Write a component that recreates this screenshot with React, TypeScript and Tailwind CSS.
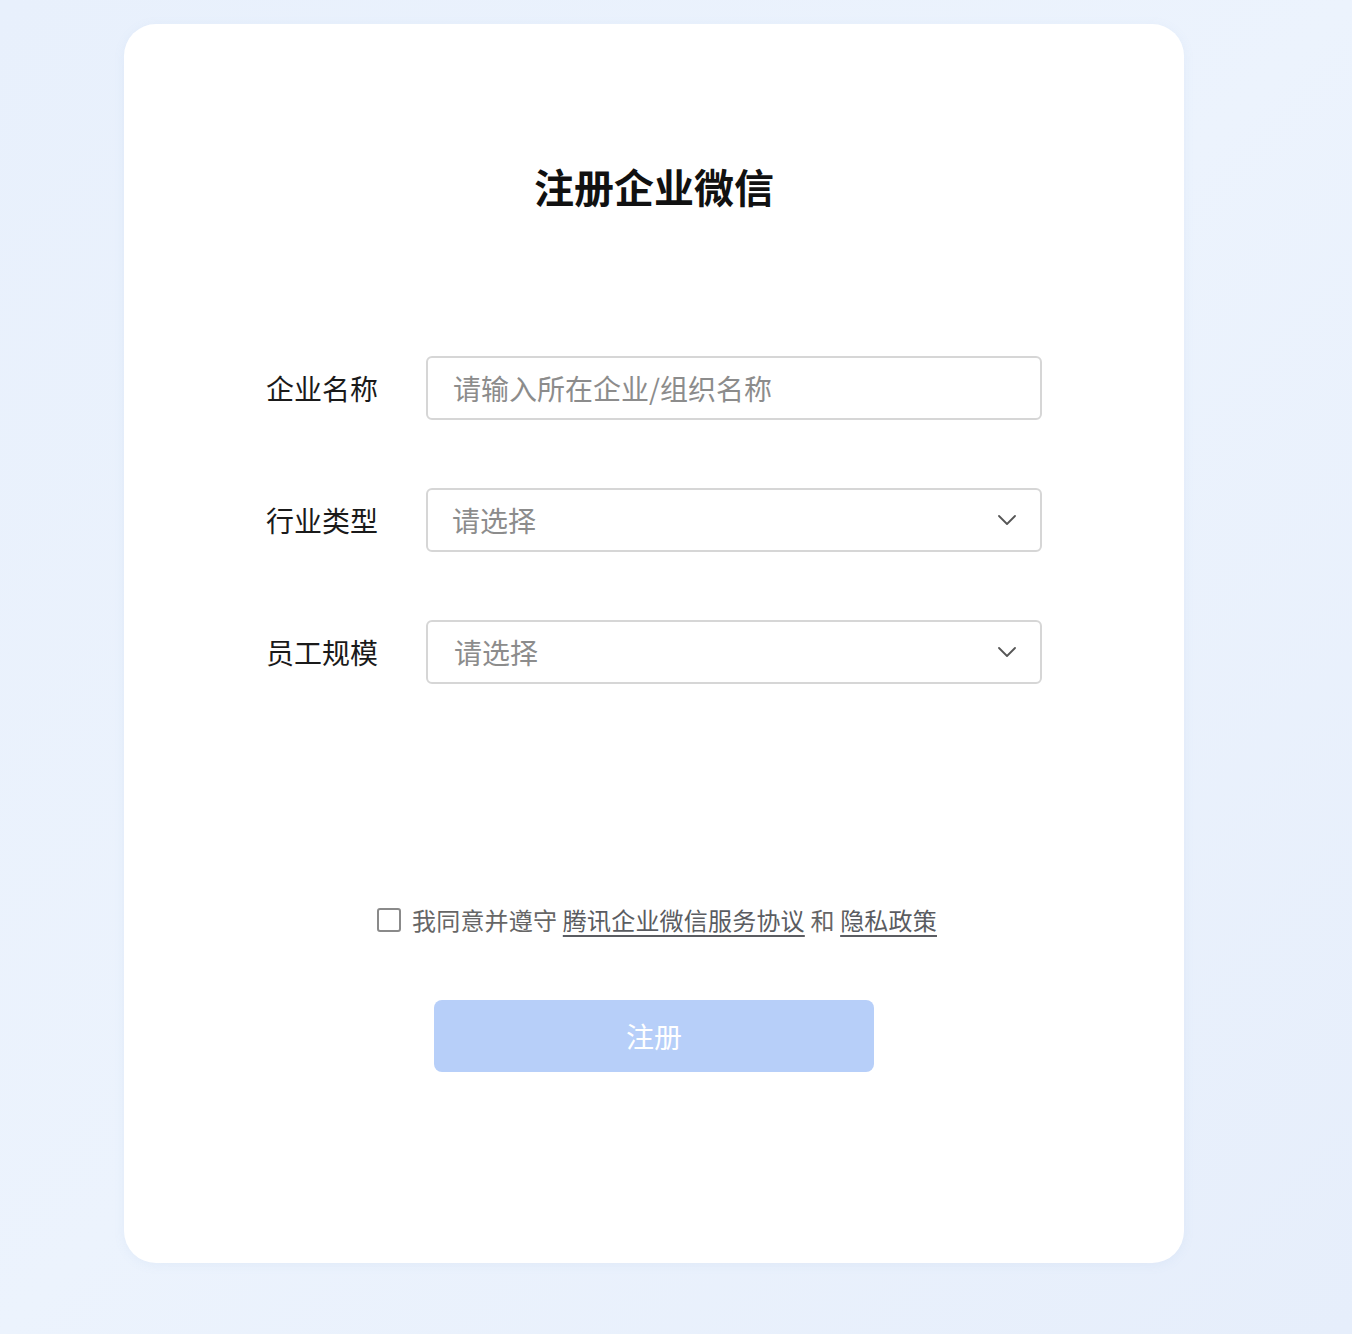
const FONT = "font-['PingFang_SC','Noto_Sans_CJK_SC','Noto_Sans',sans-serif]";

function Chevron() {
  return (
    <svg width="18" height="10" viewBox="0 0 18 10" fill="none" className="text-[#555]">
      <path d="M1 1l8 8 8-8" stroke="currentColor" strokeWidth="1.8" strokeLinecap="round" strokeLinejoin="round" />
    </svg>
  );
}

function Row({ label, children }: { label: string; children: React.ReactNode }) {
  return (
    <div className="flex items-center h-16">
      <div className="w-[160px] shrink-0 text-[28px] leading-[34px] text-[#1a1a1a]">{label}</div>
      {children}
    </div>
  );
}

function SelectBox({ pad }: { pad: string }) {
  return (
    <div className={`flex-1 h-16 flex items-center justify-between rounded-[6px] border-2 border-[#d6d6d6] bg-white ${pad} pr-[24px]`}>
      <span className="text-[28px] leading-[34px] text-[#8c8c8c]">请选择</span>
      <Chevron />
    </div>
  );
}

export default function App() {
  return (
    <div className={`${FONT} min-h-[1334px] w-full bg-gradient-to-br from-[#e8f0fc] via-[#ecf3fd] to-[#e6eefb] pt-[24px] pb-[71px]`}>
      <div className="ml-[124px] w-[1060px] rounded-[32px] bg-white shadow-[0_2px_12px_rgba(120,150,200,0.08)] px-[142px] pt-[138px] pb-[191px]">
        <h1 className="text-center text-[40px] leading-[48px] font-bold text-[#111]">注册企业微信</h1>

        <div className="mt-[146px] flex flex-col gap-[68px]">
          <Row label="企业名称">
            <div className="flex-1 h-16 flex items-center rounded-[6px] border-2 border-[#d6d6d6] bg-white pl-[25px]">
              <span className="text-[28px] leading-[34px] text-[#8c8c8c]">请输入所在企业/组织名称</span>
            </div>
          </Row>
          <Row label="行业类型">
            <SelectBox pad="pl-[24px]" />
          </Row>
          <Row label="员工规模">
            <SelectBox pad="pl-[26px]" />
          </Row>
        </div>

        <div className="mt-[220px] flex items-center justify-center h-8 pl-[6px]">
          <span className="w-6 h-6 rounded-[3px] border-2 border-[#8a8a8a] bg-white mr-[11px]" />
          <span className="text-[24px] leading-8 tracking-[0.2px] text-[#666]">
            我同意并遵守{" "}
            <span className="underline underline-offset-[5px] decoration-2 text-[#5a5c61]">腾讯企业微信服务协议</span>
            {" "}和{" "}
            <span className="underline underline-offset-[5px] decoration-2 text-[#5a5c61]">隐私政策</span>
          </span>
        </div>

        <div className="mt-[64px] flex justify-center">
          <button className="w-[440px] h-[72px] rounded-[8px] bg-[#b7cff9] text-white text-[28px] leading-[34px]">注册</button>
        </div>
      </div>
    </div>
  );
}
